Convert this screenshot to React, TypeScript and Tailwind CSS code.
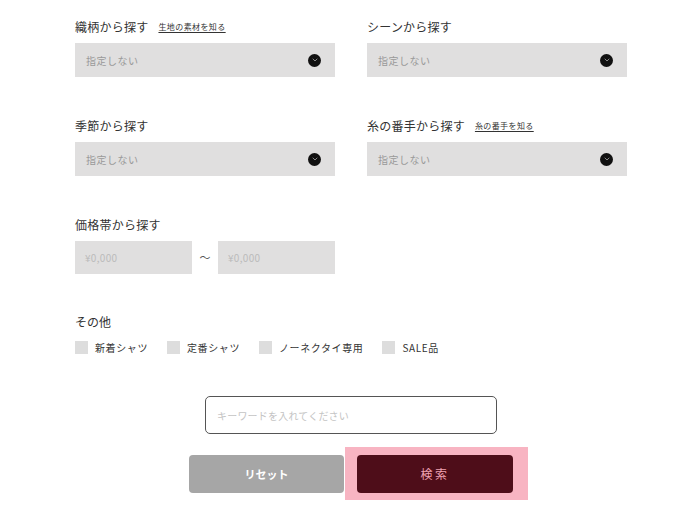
import { ChevronDown } from "lucide-react";

const font = { fontFamily: '"Noto Sans CJK JP", "Noto Sans", sans-serif' };

function Label({ text, link }: { text: string; link?: string }) {
  return (
    <div className="h-5 flex items-center gap-[10px] mb-[6px]">
      <span className="text-[12px] text-[#333] tracking-[0.02em]">{text}</span>
      {link && (
        <span className="text-[8px] text-[#333] underline underline-offset-2 tracking-[0.05em]">
          {link}
        </span>
      )}
    </div>
  );
}

function SelectBox() {
  return (
    <div className="h-[34px] bg-[#e0dfdf] flex items-center justify-between pl-[11px] pr-[14px]">
      <span className="text-[10px] text-[#999] tracking-[0.05em]">指定しない</span>
      <span className="w-[13px] h-[13px] rounded-full bg-[#111] flex items-center justify-center">
        <ChevronDown className="w-[8px] h-[8px] text-[#888]" strokeWidth={3} />
      </span>
    </div>
  );
}

function Field({ label, link }: { label: string; link?: string }) {
  return (
    <div>
      <Label text={label} link={link} />
      <SelectBox />
    </div>
  );
}

function PriceBox() {
  return (
    <div className="w-[117px] h-[33px] bg-[#e0dfdf] flex items-center pl-[10px]">
      <span className="text-[10px] text-[#bbb] tracking-[0.03em]">¥0,000</span>
    </div>
  );
}

function Check({ text }: { text: string }) {
  return (
    <label className="flex items-center gap-[7px]">
      <span className="w-[13px] h-[13px] bg-[#ddd]" />
      <span className="text-[10px] text-[#333] tracking-[0.06em]">{text}</span>
    </label>
  );
}

export default function App() {
  return (
    <div className="w-[700px] h-[518px] bg-white overflow-hidden pt-[17px]" style={font}>
      <div className="px-[75px] w-[702px]">
        <div className="grid grid-cols-2 gap-x-8 gap-y-[39px]">
          <Field label="織柄から探す" link="生地の素材を知る" />
          <Field label="シーンから探す" />
          <Field label="季節から探す" />
          <Field label="糸の番手から探す" link="糸の番手を知る" />
          <div>
            <Label text="価格帯から探す" />
            <div className="flex items-center">
              <PriceBox />
              <span className="w-[26px] text-center text-[11px] text-[#555]">～</span>
              <PriceBox />
            </div>
          </div>
        </div>

        <div className="mt-[38px]">
          <div className="h-5 flex items-center">
            <span className="text-[12px] text-[#333]">その他</span>
          </div>
          <div className="flex items-center gap-[19px] mt-[7px] h-4">
            <Check text="新着シャツ" />
            <Check text="定番シャツ" />
            <Check text="ノーネクタイ専用" />
            <Check text="SALE品" />
          </div>
        </div>
      </div>

      <div className="flex justify-center mt-[41px] pl-[2px]">
        <div className="w-[292px] h-[38px] border-[1.5px] border-[#555] rounded-[5px] flex items-center pl-[11px]">
          <span className="text-[10px] text-[#c4c4c4] tracking-[0.02em]">キーワードを入れてください</span>
        </div>
      </div>

      <div className="flex justify-center gap-[13px] mt-[21px] pl-[2px]">
        <button className="w-[155px] h-[38px] bg-[#a6a6a6] rounded-[4px] text-white text-[11px] font-bold">
          リセット
        </button>
        <div className="relative">
          <div className="absolute -left-[12px] -right-[15px] -top-[8px] -bottom-[7px] bg-[#f8b4c2]" />
          <button className="relative w-[156px] h-[38px] bg-[#4e0d19] rounded-[4px] text-[#f0a3b3] text-[12px] tracking-[0.2em]">
            検索
          </button>
        </div>
      </div>
    </div>
  );
}
